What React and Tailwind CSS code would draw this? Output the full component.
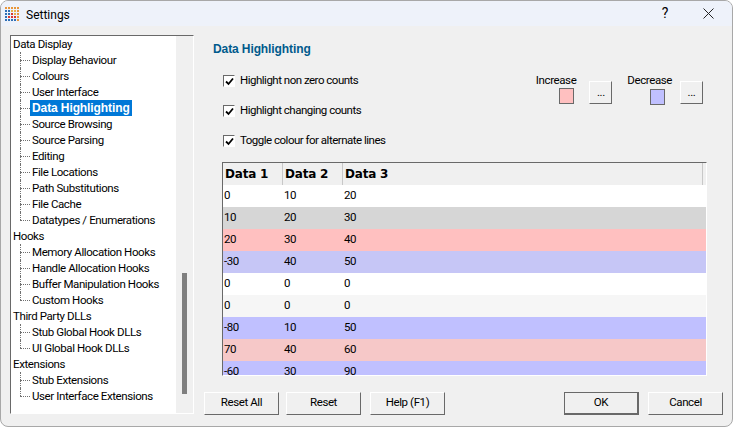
const tree = [
  { label: "Data Display", items: ["Display Behaviour", "Colours", "User Interface", "Data Highlighting", "Source Browsing", "Source Parsing", "Editing", "File Locations", "Path Substitutions", "File Cache", "Datatypes / Enumerations"] },
  { label: "Hooks", items: ["Memory Allocation Hooks", "Handle Allocation Hooks", "Buffer Manipulation Hooks", "Custom Hooks"] },
  { label: "Third Party DLLs", items: ["Stub Global Hook DLLs", "UI Global Hook DLLs"] },
  { label: "Extensions", items: ["Stub Extensions", "User Interface Extensions"] },
];

const rows = [
  ["0", "10", "20", "bg-white"],
  ["10", "20", "30", "bg-[#d6d6d6]"],
  ["20", "30", "40", "bg-[#ffc0c0]"],
  ["-30", "40", "50", "bg-[#c6c6f6]"],
  ["0", "0", "0", "bg-white"],
  ["0", "0", "0", "bg-[#f6f6f6]"],
  ["-80", "10", "50", "bg-[#c0c0ff]"],
  ["70", "40", "60", "bg-[#f6c8c8]"],
  ["-60", "30", "90", "bg-[#c0c0ff]"],
];

const iconColor = (x, y) => {
  if (y === 0 || x === 4) return "#e8963a";
  if (x === 0 || y === 4) return "#2f6fb5";
  if (x === 2 && y === 2) return "#d9362f";
  if (y === 3) return "#d9362f";
  return x === 1 ? "#2f6fb5" : "#e8b04a";
};

const AppIcon = () => (
  <svg width="16" height="16" viewBox="0 0 16 16">
    {[0, 1, 2, 3, 4].map((y) =>
      [0, 1, 2, 3, 4].map((x) => (
        <rect key={`${x}-${y}`} x={x * 3 + 1} y={y * 3 + 1} width="2" height="2" fill={iconColor(x, y)} />
      ))
    )}
  </svg>
);

const RaisedButton = ({ children, className = "" }) => (
  <button className={`h-[23px] bg-[#f0f0f0] text-black ${className}`}>
    {children}
  </button>
);

const raised = "border border-t-white border-l-white border-r-[#696969] border-b-[#696969]";

const Check = ({ label }) => (
  <div className="flex items-center gap-[5px] h-4">
    <span className="flex items-center justify-center w-[12px] h-[12px] bg-white border border-t-[#696969] border-l-[#696969] border-r-white border-b-white">
      <svg width="9" height="9" viewBox="0 0 9 9">
        <path d="M1 4.5 L3.5 7 L8 1.5" fill="none" stroke="#000" strokeWidth="1.8" />
      </svg>
    </span>
    <span className="text-black tracking-[-0.5px]">{label}</span>
  </div>
);

const Swatch = ({ label, color, top, overhang }) => (
  <div className="flex gap-[15px]">
    <div className="flex flex-col items-end">
      <span className={`leading-[14px] text-black ${overhang}`}>{label}</span>
      <span className={`w-[15px] h-4 border border-[#696969] mt-[1px] ${color} ${top}`}></span>
    </div>
    <RaisedButton className={`${raised} w-[23px] mt-[8px] leading-none text-[#400040]`}>...</RaisedButton>
  </div>
);

const TreeGroup = ({ group }) => (
  <div>
    <div className="h-4 leading-4 pl-[2px]">{group.label}</div>
    <div>
      {group.items.map((item, i) => (
        <div key={item} className="relative h-4 leading-4 pl-[19px]">
          <span className="absolute left-[9px] top-[8px] w-[10px] border-t border-dotted border-[#707070]"></span>
          <span className="absolute left-[9px] top-0 border-l border-dotted border-[#707070]" style={{ height: i === group.items.length - 1 ? 8 : 16 }}></span>
          <span className={item === "Data Highlighting" ? "inline-block h-4 px-[2px] bg-[#0078d7] text-white font-bold font-['Liberation_Sans',sans-serif] text-xs tracking-[-0.1px]" : "inline-block px-[2px]"}>
            {item}
          </span>
        </div>
      ))}
    </div>
  </div>
);

export default function App() {
  return (
    <div className="w-[733px] h-[427px] bg-[#f0f0f0] font-['Roboto',sans-serif] text-[11.5px] tracking-[-0.4px] flex flex-col overflow-hidden rounded-lg border border-[#a8a8a8]">
      {/* title bar */}
      <div className="h-[25px] shrink-0 bg-[#eef2fa] flex items-center pl-[3px]">
        <AppIcon />
        <span className="ml-[6px] pt-[2px] text-xs tracking-normal text-black">Settings</span>
        <span className="ml-auto mr-[35px] text-[14px] text-black">?</span>
        <svg className="mr-[18px]" width="11" height="11" viewBox="0 0 11 11">
          <path d="M0.5 0.5 L10.5 10.5 M10.5 0.5 L0.5 10.5" stroke="#222" strokeWidth="1" />
        </svg>
      </div>

      <div className="flex flex-1 min-h-0">
        {/* left tree */}
        <div className="ml-[9px] mt-[9px] w-[184px] h-[379px] shrink-0 flex bg-white border border-t-[#696969] border-l-[#696969] border-r-white border-b-white text-black">
          <div className="flex-1 overflow-hidden whitespace-nowrap">
            {tree.map((group) => (
              <TreeGroup key={group.label} group={group} />
            ))}
          </div>
          <div className="w-[17px] bg-[#f0f0f0] flex flex-col pt-[237px] items-center">
            <div className="w-[5px] h-[121px] bg-[#7f7f7f]"></div>
          </div>
        </div>

        {/* right panel */}
        <div className="flex-1 flex flex-col pl-[10px] min-w-0">
          <div className="h-[44px] pt-[15px] pl-[9px] font-bold font-['Liberation_Sans',sans-serif] text-xs tracking-[-0.1px] text-[#005a8c] leading-4">Data Highlighting</div>
          <div className="flex pl-[19px] pr-[29px]">
            <div className="flex flex-col gap-[14px] pt-[3px]">
              <Check label="Highlight non zero counts" />
              <Check label="Highlight changing counts" />
              <Check label="Toggle colour for alternate lines" />
            </div>
            <div className="ml-auto flex gap-[15px] mt-[3px] h-[40px]">
              <Swatch label="Increase" color="bg-[#ffc0c0]" top="" overhang="-mr-[2px]" />
              <Swatch label="Decrease" color="bg-[#c0c0ff]" top="translate-y-[1px]" overhang="-mr-[7px]" />
            </div>
          </div>

          {/* table */}
          <div className="ml-[18px] mt-[13px] w-[485px] h-[214px] shrink-0 border border-t-[#696969] border-l-[#696969] border-r-white border-b-white overflow-hidden text-black flex flex-col">
            <div className="h-[22px] shrink-0 flex bg-[#f0f0f0] text-xs tracking-[-0.2px] font-bold font-['DejaVu_Sans',sans-serif]">
              <div className="w-[60px] pl-[2px] leading-[22px] border-r border-[#c8c8c8]">Data 1</div>
              <div className="w-[60px] pl-[2px] leading-[22px] border-r border-[#c8c8c8]">Data 2</div>
              <div className="w-[360px] pl-[2px] leading-[22px] border-r border-[#c8c8c8]">Data 3</div>
            </div>
            {rows.map(([a, b, c, bg], i) => (
              <div key={i} className={`h-[22px] shrink-0 flex items-center ${bg}`}>
                <div className="w-[60px] pl-[1px]">{a}</div>
                <div className="w-[60px] pl-[1px]">{b}</div>
                <div className="pl-[1px]">{c}</div>
              </div>
            ))}
          </div>

          {/* buttons */}
          <div className="flex mt-[16px] pr-[9px]">
            <RaisedButton className={`${raised} w-[75px] pb-[1px]`}>Reset All</RaisedButton>
            <RaisedButton className={`${raised} w-[75px] ml-[7px] pb-[1px]`}>Reset</RaisedButton>
            <RaisedButton className={`${raised} w-[75px] ml-[9px] pb-[1px]`}>Help (F1)</RaisedButton>
            <RaisedButton className="w-[75px] ml-auto border border-[#696969] border-b-2 border-r-2 pb-[1px]">OK</RaisedButton>
            <RaisedButton className={`${raised} w-[75px] ml-[9px] pb-[1px]`}>Cancel</RaisedButton>
          </div>
        </div>
      </div>
    </div>
  );
}
